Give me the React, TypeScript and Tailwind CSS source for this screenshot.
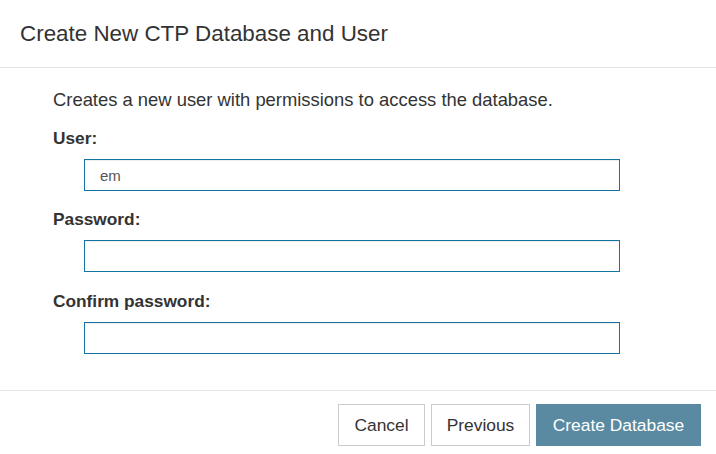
export default function App() {
  return (
    <div className="flex h-[454px] w-[716px] flex-col bg-white font-['Liberation_Sans',Arial,sans-serif] text-[#333]">
      {/* Header */}
      <div className="flex h-[68px] shrink-0 items-center border-b border-[#e5e5e5] px-5">
        <h1 className="text-[22.4px] font-normal text-[#333]">Create New CTP Database and User</h1>
      </div>

      {/* Body */}
      <div className="flex-1 pl-[53px] pr-[96px] pt-[22px]">
        <p className="text-[18.4px] leading-5">Creates a new user with permissions to access the database.</p>

        <label className="mt-[18px] block text-[17.3px] font-bold leading-5">User:</label>
        <input
          defaultValue="em"
          className="ml-[31px] mt-[11px] block h-[32px] w-[536px] border border-[#1473a3] px-[15px] text-[15px] text-[#555] shadow-[inset_0_1px_1px_rgba(0,0,0,0.075)] outline-none"
        />

        <label className="mt-[18px] block text-[17.3px] font-bold leading-5">Password:</label>
        <input
          type="password"
          className="ml-[31px] mt-[11px] block h-[32px] w-[536px] border border-[#1473a3] px-[15px] text-[15px] shadow-[inset_0_1px_1px_rgba(0,0,0,0.075)] outline-none"
        />

        <label className="mt-[19px] block text-[17.3px] font-bold leading-5">Confirm password:</label>
        <input
          type="password"
          className="ml-[31px] mt-[11px] block h-[32px] w-[536px] border border-[#1473a3] px-[15px] text-[15px] shadow-[inset_0_1px_1px_rgba(0,0,0,0.075)] outline-none"
        />
      </div>

      {/* Footer */}
      <div className="flex h-[64px] shrink-0 items-start justify-end gap-[6px] border-t border-[#e5e5e5] pr-[15px] pt-[13px]">
        <button className="h-[42px] w-[87px] border border-[#ccc] bg-white text-[17.4px] text-[#333]">Cancel</button>
        <button className="h-[42px] w-[99px] border border-[#ccc] bg-white text-[17.4px] text-[#333]">Previous</button>
        <button className="h-[42px] w-[165px] border border-[#5a8aa2] bg-[#5a8aa2] text-[17.4px] text-white">Create Database</button>
      </div>
    </div>
  );
}
